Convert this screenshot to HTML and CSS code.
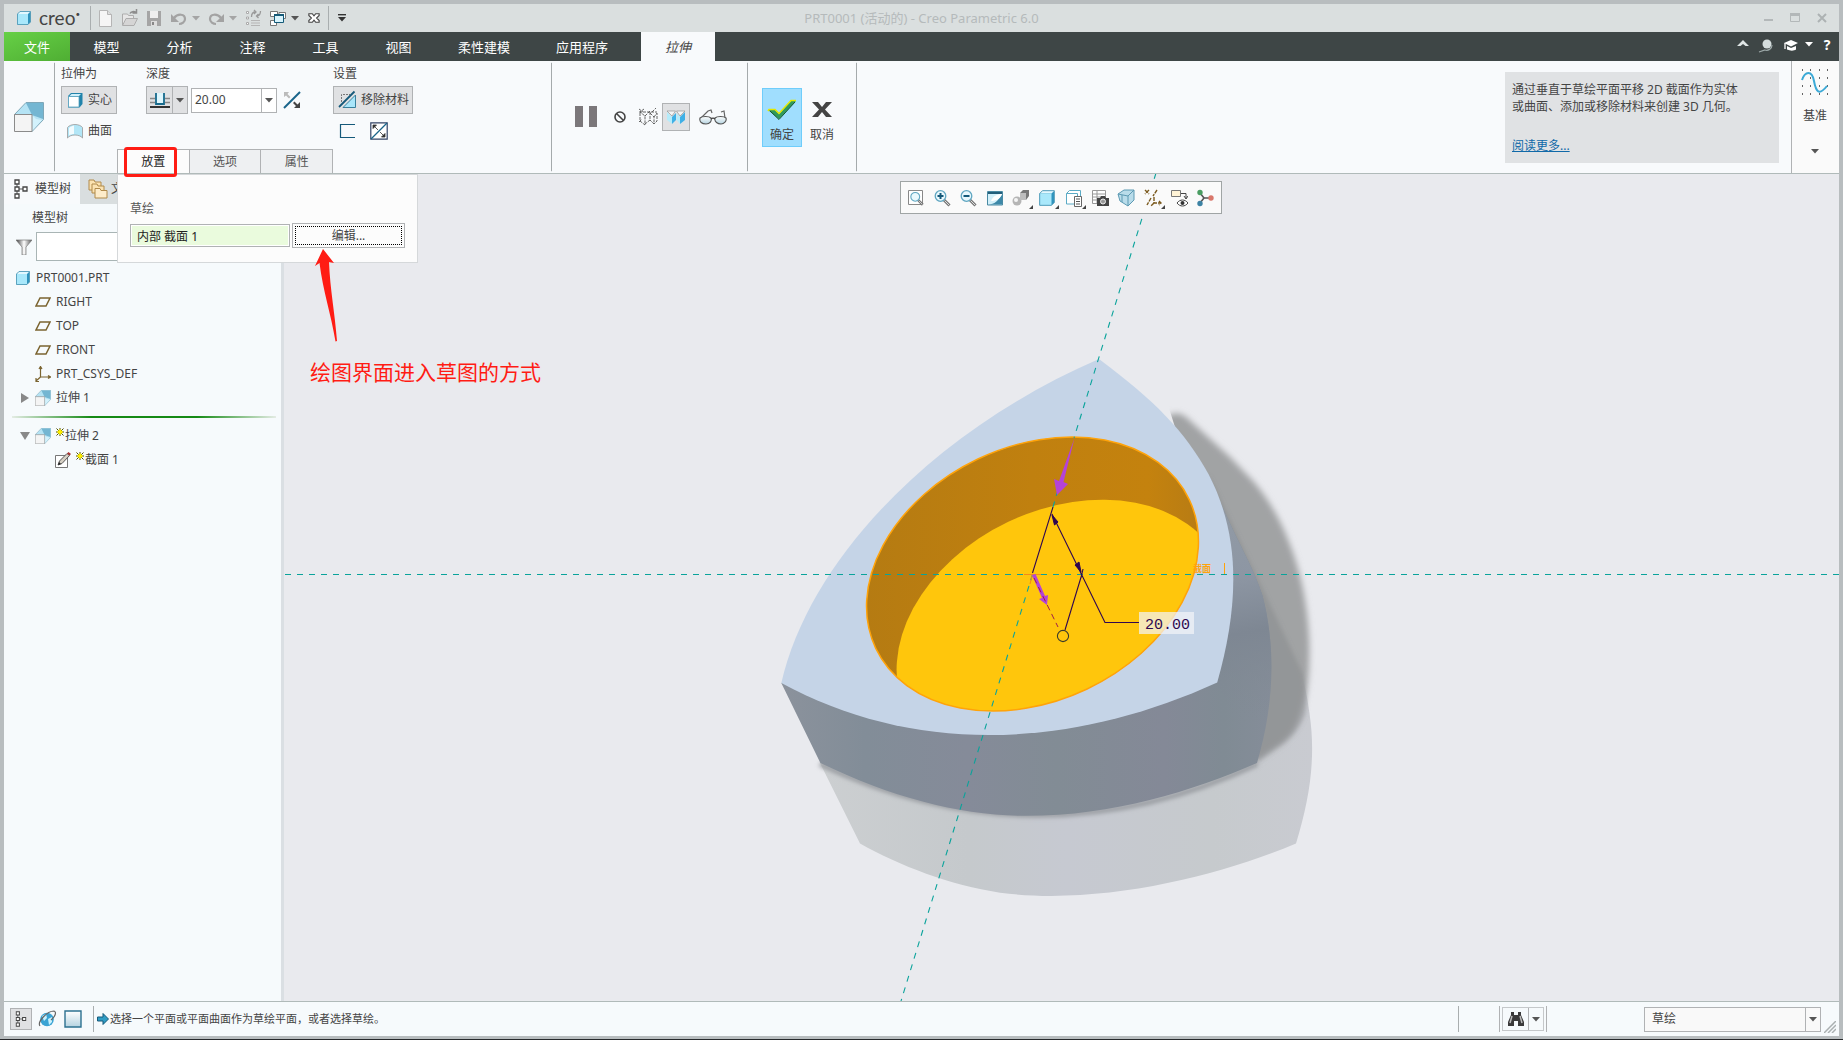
FILE: index.html
```html
<!DOCTYPE html>
<html lang="zh-CN">
<head>
<meta charset="utf-8">
<meta name="viewport" content="width=device-width, initial-scale=1">
<title>PRT0001 (活动的) - Creo Parametric 6.0</title>
<link rel="stylesheet" href="styles.css">
</head>
<body>
<svg class="defs" aria-hidden="true">
  <defs>
    <linearGradient id="gBlue" x1="0" y1="0" x2="1" y2="1"><stop offset="0" stop-color="#c9f1ff"/><stop offset="1" stop-color="#8fdcf8"/></linearGradient>
    <linearGradient id="gPane" x1="0" y1="0" x2="0" y2="1"><stop offset="0" stop-color="#fff"/><stop offset="1" stop-color="#b5d3e0"/></linearGradient>
    <linearGradient id="gGrey" x1="0" y1="0" x2="1" y2="0"><stop offset="0" stop-color="#333"/><stop offset=".5" stop-color="#fff"/><stop offset="1" stop-color="#555"/></linearGradient>
    <symbol id="cube" viewBox="0 0 16 16"><path d="M1.500 4L4 1.500H14.500V12L12 14.500H1.500z" fill="#2f93bd"/><path d="M1.500 4L4 1.500H14.500L12 4z" fill="#e2f8ff"/><path d="M1.500 4H12v10.500H1.500z" fill="#a9e8fb"/><path d="M1.500 4L4 1.500H14.500V12L12 14.500H1.500z" fill="none" stroke="#4a96b4" stroke-width=".8"/></symbol>
    <symbol id="extrude" viewBox="0 0 30 30"><path d="M12 .5H29.500V17.500L18 29.500V12.500H.5z" fill="#b5e3f4" stroke="#7fa7b8"/><path d="M12 1L29 1V17L18 13z" fill="#74b6d2"/><path d="M18 29V13L22 17L28 18z" fill="#d3f2fc"/><path d="M.5 12.500h17.500v17H.5z" fill="#f4f4f4" stroke="#8b8b8b"/></symbol>
    <symbol id="plane" viewBox="0 0 16 10"><path d="M5 1h10l-4 8H1z" fill="none" stroke="#7b6430" stroke-width="1.500"/></symbol>
    <symbol id="tree" viewBox="0 0 14 20"><path d="M3 5v3M3 12v3M5 10h4" stroke="#555" fill="none"/><path d="M1 1h4v4H1zM1 8h4v4H1zM1 15h4v4H1zM9 8h4v4H9z" fill="#fff" stroke="#444" stroke-width="1.300"/></symbol>
    <symbol id="down" viewBox="0 0 8 5"><path d="M0 0h8L4 4.500z" fill="currentColor"/></symbol>
    <symbol id="star" viewBox="0 0 8 8"><path d="M2 2h4v4H2z" fill="#ff0"/><path d="M.5 .5l2 2M7.500 .5l-2 2M.5 7.500l2-2M7.500 7.500l-2-2M4 0v2M4 6v2M0 4h2M6 4h2" stroke="#4c4c00" stroke-width="1"/><path d="M3 1.500h2v5H3zM1.500 3h5v2h-5z" fill="#ffee00"/></symbol>
    <symbol id="lens" viewBox="0 0 18 18"><path d="M11 11l5.500 5.500" stroke="#777" stroke-width="3"/><path d="M11.500 11.500l4.500 4.500" stroke="#ddd"/><circle cx="7.500" cy="7" r="5.300" fill="#e9f8fd" stroke="#5fa6c1" stroke-width="1.300"/></symbol>
  </defs>
</svg>

<header class="titlebar">
  <div class="quick">
    <svg class="i16" viewBox="0 0 16 16"><use href="#cube"/></svg>
    <span class="brand">creo<sup>•</sup></span>
    <span class="vline"></span>
    <button class="plain q-wide" aria-label="新建"><svg class="i18" viewBox="0 0 18 18"><path d="M2.500 1.500h8l4 4v12h-12z" fill="#f5f5f5" stroke="#b5b5b5"/><path d="M10.500 1.500v4h4" fill="#ddd" stroke="#b5b5b5"/></svg></button>
    <button class="plain q-wide" aria-label="打开"><svg class="i18" viewBox="0 0 18 18"><path d="M1.500 16V5h5l1 1.500h5V9" fill="#e6e6e6" stroke="#adadad"/><path d="M1.500 16.500L5 9.500h11.500l-3.500 7z" fill="#d5d5d5" stroke="#adadad"/><path d="M9 4.500c1-2 4-2.500 6-1M15.500 0v4h-4" fill="none" stroke="#8d8d8d" stroke-width="1.500"/></svg></button>
    <button class="plain q-wide" aria-label="保存"><svg class="i18" viewBox="0 0 18 18"><path d="M2 2h14v15H2z" fill="#a5a5a5"/><path d="M5 2h8v7H5z" fill="#eee"/><path d="M6 12h6v5H6z" fill="#ddd"/><path d="M7 13h2v3H7z" fill="#888"/></svg></button>
    <button class="plain undo" aria-label="撤消"><svg class="i18" viewBox="0 0 18 18"><path d="M4 9c4-5 11-4 11 1 0 3-3 5-6 5" fill="none" stroke="#a3a3a3" stroke-width="2.200"/><path d="M1 5v8h8z" fill="#a3a3a3"/></svg><svg class="arr dim" viewBox="0 0 8 5"><use href="#down"/></svg></button>
    <button class="plain undo" aria-label="重做"><svg class="i18" viewBox="0 0 18 18"><path d="M14 9C10 4 3 5 3 10c0 3 3 5 6 5" fill="none" stroke="#a3a3a3" stroke-width="2.200"/><path d="M17 5v8H9z" fill="#a3a3a3"/></svg><svg class="arr dim" viewBox="0 0 8 5"><use href="#down"/></svg></button>
    <button class="plain regen" aria-label="重新生成"><svg class="i18" viewBox="0 0 18 18"><path d="M2.500 2.500h2v2h-2zM2.500 8h2v2h-2zM2.500 13.500h2v2h-2z" fill="#fff" stroke="#aaa"/><path d="M7 11.500h9M7 14h9M7 16.500h9" stroke="#b5b5b5" stroke-width="1.200"/><path d="M7.500 8c0-4 2-5 4-5M10 1l2 2-2 2M16.500 2c0 4-2 5-4 5M14.500 5l-2 2 2 2" fill="none" stroke="#999" stroke-width="1.300"/></svg></button>
    <button class="plain undo" aria-label="窗口"><svg class="i18" viewBox="0 0 18 18"><path d="M1.500 2.500h7v5h-7zM1.500 11.500h6v5h-6z" fill="#fff" stroke="#777"/><path d="M10 3.500h6.500v6H10z" fill="#fff" stroke="#777"/><path d="M5.500 5.500h9v8h-9z" fill="#d8f3fc" stroke="#155a78"/><path d="M5 5h10v2H5z" fill="#155a78"/></svg><svg class="arr" viewBox="0 0 8 5"><use href="#down"/></svg></button>
    <button class="plain q-close" aria-label="关闭窗口"><svg class="i12" viewBox="0 0 14 14"><path d="M1 2h4l2 2.500L9 2h4v2l-3 3 3 3v2H9L7 9.500 5 12H1v-2l3-3-3-3z" fill="#fff" stroke="#444" stroke-width="1.300"/></svg></button>
    <span class="vline"></span>
    <button class="plain q-more" aria-label="自定义快速访问工具栏"><svg class="i10" viewBox="0 0 10 8"><path d="M1 .7h8" stroke="#333" stroke-width="1.400"/><path d="M1 3h8L5 7.500z" fill="#333"/></svg></button>
  </div>
  <h1 class="doc-title">PRT0001 (活动的) - Creo Parametric 6.0</h1>
  <div class="winctl">
    <button class="plain" aria-label="最小化"><svg class="i12" viewBox="0 0 12 12"><path d="M2 8h9" stroke="#b3b8b9" stroke-width="2"/></svg></button>
    <button class="plain" aria-label="最大化"><svg class="i12" viewBox="0 0 12 12"><path d="M1.500 2.500h9v7h-9z" fill="none" stroke="#b3b8b9"/><path d="M1 2.500h10" stroke="#b3b8b9" stroke-width="3"/></svg></button>
    <button class="plain" aria-label="关闭"><svg class="i12" viewBox="0 0 12 12"><path d="M2 2l8 8M10 2l-8 8" stroke="#adb2b3" stroke-width="2"/></svg></button>
  </div>
</header>

<nav class="tabs">
  <button class="tab file">文件</button>
  <button class="tab">模型</button>
  <button class="tab">分析</button>
  <button class="tab">注释</button>
  <button class="tab">工具</button>
  <button class="tab">视图</button>
  <button class="tab">柔性建模</button>
  <button class="tab">应用程序</button>
  <button class="tab active">拉伸</button>
  <div class="tabs-tools">
    <button class="plain" aria-label="最小化功能区"><svg class="i12" viewBox="0 0 12 12"><path d="M0 7l6-6 6 6H8.500L6 5 3.500 7z" fill="#dfe5e5"/></svg></button>
    <button class="plain" aria-label="命令搜索"><svg class="i16" viewBox="0 0 16 16"><circle cx="9" cy="7" r="4.500" fill="#d5dede"/><path d="M14 8c0 4-4 6-7 5l-6 2" fill="none" stroke="#9eaaaa" stroke-width="1.200"/></svg></button>
    <button class="plain cap" aria-label="学习"><svg class="i16" viewBox="0 0 16 16"><path d="M8 3l7 3-7 3.500L1 6z" fill="#fff"/><path d="M4 9l4 2 5-2v3.500c-2 1.500-6 1.500-9 0z" fill="#fff"/><path d="M2 6v6" stroke="#fff" stroke-width="1.300"/></svg><svg class="arr" viewBox="0 0 8 5"><use href="#down"/></svg></button>
    <button class="plain help" aria-label="帮助">?</button>
  </div>
</nav>

<section class="ribbon">
  <div class="feature"><svg class="i30" viewBox="0 0 30 30"><use href="#extrude"/></svg></div>
  <div class="dash">
    <div class="groups">
      <div class="group g-as">
        <h2>拉伸为</h2>
        <button class="btn on"><svg class="i16" viewBox="0 0 16 16"><path d="M1 4L4 1h11.500V12l-3 3.500H1z" fill="#2183ab"/><path d="M2.500 4l2-2H14l-2 2z" fill="#cfeffa"/><path d="M1.500 4.500H12v10.500H1.500z" fill="#fff" stroke="#5ba3bf" stroke-width=".8"/></svg>实心</button>
        <button class="btn"><svg class="i16" viewBox="0 0 16 16"><path d="M.5 15V4.500c3-4 12-4 15 0V15c-3-4-12-4-15 0z" fill="#b2e6f7" stroke="#999" stroke-width=".8"/><path d="M2 12.500V5c1-1 3-2 5-2.500v8.500c-2 0-4 .5-5 1.500z" fill="#f2fbfe"/></svg>曲面</button>
      </div>
      <div class="group g-depth">
        <h2>深度</h2>
        <div class="row">
          <div class="split">
            <button aria-label="盲孔"><svg class="i20" viewBox="0 0 20 16"><path d="M0 6.500h5M15 6.500h5M0 10.500h5M15 10.500h5" stroke="#888" stroke-width="1.500"/><path d="M6 1v11h8V1" fill="#dff6fd" stroke="#176a8c" stroke-width="1.800"/><path d="M0 15h20" stroke="#333" stroke-width="2"/></svg></button>
            <button class="drop" aria-label="深度选项"><svg class="arr" viewBox="0 0 8 5"><use href="#down"/></svg></button>
          </div>
          <div class="combo"><input type="text" value="20.00" aria-label="深度值"><button class="drop" aria-label="最近的值"><svg class="arr" viewBox="0 0 8 5"><use href="#down"/></svg></button></div>
          <button class="plain flip" aria-label="反向"><svg class="i18" viewBox="0 0 18 18"><path d="M1 17L17 1" stroke="#19648a" stroke-width="2"/><path d="M1 1h5L4.500 3l3 3-1.500 1.500-3-3L1 6z" fill="#bbb"/><path d="M17 17h-6l2-2-3-3 1.500-1.500 3 3L17 11z" fill="#444"/></svg></button>
        </div>
      </div>
      <div class="group g-set">
        <h2>设置</h2>
        <button class="btn on remove"><svg class="i20" viewBox="0 0 20 20"><path d="M3.500 12V4.500H12" fill="none" stroke="#777" stroke-dasharray="2 1"/><path d="M5 17.500L17.500 5v12.500z" fill="#a9e6fa" stroke="#39809c"/><path d="M1 17L16.500 1.500" stroke="#15597a" stroke-width="1.800"/></svg>移除材料</button>
        <div class="row minis">
          <button class="plain" aria-label="加厚草绘"><svg class="i18" viewBox="0 0 18 18"><path d="M16 2.500H1.500v13H16" fill="none" stroke="#15597a" stroke-width="1.200"/></svg></button>
          <button class="plain" aria-label="反向材料侧"><svg class="i18" viewBox="0 0 18 18"><path d="M.8.800h16.400v16.400H.800z" fill="#fff" stroke="#346" stroke-width="1.200"/><path d="M1 17L17 1" stroke="#19648a" stroke-width="1.200"/><path d="M3 3h3.500L3 6.500zM4 4l4 4M15 15h-3.500l3.500-3.500zM14 14l-4-4" fill="#333" stroke="#333" stroke-width=".8"/></svg></button>
        </div>
      </div>
    </div>
    <div class="subtabs">
      <button class="subtab current">放置</button>
      <button class="subtab">选项</button>
      <button class="subtab">属性</button>
      <div class="popup">
        <label for="sk">草绘</label>
        <div class="popup-row"><input id="sk" type="text" value="内部 截面 1"><button class="edit"><span>编辑...</span></button></div>
      </div>
    </div>
  </div>
  <div class="view-ctl">
    <button class="plain" aria-label="暂停"><svg class="i24" viewBox="0 0 24 22"><path d="M1 0h8v21H1zM15 0h8v21h-8z" fill="#7b777a"/></svg></button>
    <button class="plain" aria-label="无预览"><svg class="i12" viewBox="0 0 12 12"><circle cx="6" cy="6" r="5" fill="none" stroke="#444" stroke-width="1.600"/><path d="M2.500 2.500l7 7" stroke="#444" stroke-width="1.600"/></svg></button>
    <button class="plain" aria-label="分离预览"><svg class="i20" viewBox="0 0 20 18"><path d="M1 4h18M2 5v8l5 4v-9L2 4l4-3M7 8l5-5v9l-5 4M12 5l4 4v7l-4-4M16 9l3-4v8l-3 3M1 1l4 3M14 4l4-4M1 14l3-3" fill="none" stroke="#555" stroke-dasharray="3 1" stroke-width=".9"/></svg></button>
    <button class="press" aria-label="连接预览"><svg class="i20" viewBox="0 0 20 14"><path d="M1 2l5 5v7l-5-4z" fill="#b5ecfb"/><path d="M6 7l4-4v7l-4 4z" fill="#3fb0e6"/><path d="M10.500 3l3.500 4v7l-3.500-4z" fill="#b5ecfb"/><path d="M14 7l5-5v8l-5 4z" fill="#3fb0e6"/><path d="M1 1h8.500L6 6zM10.500 1H19l-5 5z" fill="#f5f5f5" stroke="#888" stroke-width=".6"/></svg></button>
    <button class="plain" aria-label="已验证预览"><svg class="i28" viewBox="0 0 28 16"><path d="M2 9L9 2l3-1 1 3M26 9l-1-7-3 1" fill="none" stroke="#666" stroke-width="1.200"/><path d="M1 9c2-2 9-2 11 0 1 3-1 6-5 6S0 13 1 9zM16 9c2-2 9-2 11 0 1 3-2 6-5 6s-7-2-6-6z" fill="url(#gPane)" stroke="#555" stroke-width="1.100"/><path d="M12 10c1-1 3-1 4 0" fill="none" stroke="#444" stroke-width="1.300"/></svg></button>
  </div>
  <div class="confirm">
    <button class="ok"><svg class="i30" viewBox="0 0 30 22"><path d="M1 11h7l4 4L24 2h5L12 20z" fill="#2f9a5c"/><path d="M1 12l1-1.500h6l4 4L24 1.500h5" fill="none" stroke="#e4e800" stroke-width="1.500"/><path d="M3 12l9 8.500L28 3" fill="none" stroke="#14552c" stroke-width="1"/></svg>确定</button>
    <button class="no"><svg class="i20" viewBox="0 0 20 18"><path d="M0 1h6l4 5 4-5h6l-7 7.500 7 7.500h-6l-4-5-4 5H0l7-7.500z" fill="#444"/></svg>取消</button>
  </div>
  <aside class="tip">
    <p>通过垂直于草绘平面平移 2D 截面作为实体<br>或曲面、添加或移除材料来创建 3D 几何。</p>
    <a href="#more">阅读更多...</a>
  </aside>
  <button class="datum"><svg class="i28" viewBox="0 0 28 28"><path d="M1 1h1M9 1h1M18 1h1M26 1h1M1 9h1M9 9h1M18 9h1M26 9h1M1 17h1M9 17h1M18 17h1M26 17h1M1 25h1M9 25h1M18 25h1M26 25h1" stroke="#333" stroke-width="1.300"/><path d="M1 11C4 2 11 1 13 12s5 15 13 5" fill="none" stroke="#3ba9d6" stroke-width="2"/></svg><span>基准</span><svg class="arr" viewBox="0 0 8 5"><use href="#down"/></svg></button>
</section>

<main class="work">
  <aside class="navigator">
    <div class="nav-tabs">
      <button class="nav-tab sel"><svg class="i14x20" viewBox="0 0 14 20"><use href="#tree"/></svg>模型树</button>
      <button class="nav-tab"><svg class="i20" viewBox="0 0 20 20"><path d="M1 3V1h5l1 2h6v8H1z" fill="#fbe3b2" stroke="#b08a4b"/><path d="M4 7V5h5l1 2h6v7H4z" fill="#fbe3b2" stroke="#b08a4b"/><path d="M7 19V9.500h5l1 2h6V19z" fill="#fdecca" stroke="#b08a4b"/></svg>文件夹浏览器</button>
    </div>
    <h2 class="nav-title">模型树</h2>
    <div class="filter"><svg class="i16" viewBox="0 0 16 16"><path d="M0 1h16L10 8v8H6V8z" fill="url(#gGrey)" stroke="#777" stroke-width=".7"/></svg><input type="search" aria-label="过滤模型树"></div>
    <ul class="model-tree">
      <li class="l0"><svg class="i16" viewBox="0 0 16 16"><use href="#cube"/></svg>PRT0001.PRT</li>
      <li class="l1"><svg class="i16" viewBox="0 0 16 10"><use href="#plane"/></svg>RIGHT</li>
      <li class="l1"><svg class="i16" viewBox="0 0 16 10"><use href="#plane"/></svg>TOP</li>
      <li class="l1"><svg class="i16" viewBox="0 0 16 10"><use href="#plane"/></svg>FRONT</li>
      <li class="l1"><svg class="i16" viewBox="0 0 16 16"><path d="M5.500 1v10H15M5.500 11L1 15M4 3l1.500-2.500L7 3M13 9.500l2.500 1.500-2.500 1.500M1 12v3.500h3" fill="none" stroke="#7b6430" stroke-width="1.200"/></svg>PRT_CSYS_DEF</li>
      <li class="l1 exp"><svg class="tw" viewBox="0 0 8 10"><path d="M0 0l8 5-8 5z" fill="#888"/></svg><svg class="i16" viewBox="0 0 30 30"><use href="#extrude"/></svg>拉伸 1</li>
      <li class="insert"></li>
      <li class="l1 exp"><svg class="tw" viewBox="0 0 10 10"><path d="M0 1h10L5 9z" fill="#888"/></svg><svg class="i16" viewBox="0 0 30 30"><use href="#extrude"/></svg><span><svg class="st" viewBox="0 0 8 8"><use href="#star"/></svg>拉伸 2</span></li>
      <li class="l2"><svg class="i16" viewBox="0 0 16 16"><path d="M.5 3.500h12v12H.5z" fill="#fff" stroke="#777"/><path d="M3 13l1.500-4L12 1.500l2.500 2L7 11.500z" fill="#d7d0c4" stroke="#555"/><path d="M12 1.500L13.500 0 16 2l-1.500 1.500z" fill="#a33"/><path d="M3 13l1-3 2 2z" fill="#222"/></svg><span><svg class="st" viewBox="0 0 8 8"><use href="#star"/></svg>截面 1</span></li>
    </ul>
  </aside>

  <section class="stage">
    <svg class="scene" viewBox="284 174 1555 827" preserveAspectRatio="xMidYMid slice" role="img" aria-label="三维模型">
      <defs>
        <clipPath id="hole"><ellipse cx="1032.500" cy="574" rx="173.500" ry="127.300" transform="rotate(-25.400 1032.500 574)"/></clipPath>
        <clipPath id="behind"><path d="M1160 380H1340V780H1257L1230 600z"/></clipPath>
        <linearGradient id="front" x1="781" y1="0" x2="1273" y2="0" gradientUnits="userSpaceOnUse"><stop offset="0" stop-color="#8b929c"/><stop offset=".17" stop-color="#828d98"/><stop offset=".38" stop-color="#858b99"/><stop offset=".56" stop-color="#828c95"/><stop offset=".78" stop-color="#848997"/><stop offset=".9" stop-color="#808b94"/><stop offset="1" stop-color="#858d99"/></linearGradient>
        <linearGradient id="side" x1="1225" y1="500" x2="1262" y2="720" gradientUnits="userSpaceOnUse"><stop offset="0" stop-color="#929ba6"/><stop offset=".35" stop-color="#8d96a3"/><stop offset=".6" stop-color="#7e8793"/><stop offset="1" stop-color="#828b95" stop-opacity="0"/></linearGradient>
        <linearGradient id="wall" x1="866" y1="0" x2="1198" y2="0" gradientUnits="userSpaceOnUse"><stop offset="0" stop-color="#b57b12"/><stop offset=".5" stop-color="#c0800f"/><stop offset=".85" stop-color="#c4820e"/><stop offset="1" stop-color="#b87c14"/></linearGradient>
        <linearGradient id="mirror" x1="820" y1="0" x2="1312" y2="0" gradientUnits="userSpaceOnUse"><stop offset="0" stop-color="#cccfd1"/><stop offset=".3" stop-color="#c5c9cc"/><stop offset=".5" stop-color="#c6c9d1"/><stop offset=".8" stop-color="#c6cacd"/><stop offset="1" stop-color="#c9cbd1"/></linearGradient>
        <filter id="soft" x="-20%" y="-20%" width="140%" height="140%"><feGaussianBlur stdDeviation="3"/></filter>
        <filter id="soft2" x="-20%" y="-20%" width="140%" height="140%"><feGaussianBlur stdDeviation="2"/></filter>
      </defs>
      <path d="M820 763L860 843.500C900 866 950 885 1000 892.700C1100 906 1220 876 1296 843.500C1310 798 1316 757 1309.500 713.500C1305 675 1292 640 1275 600L1200 600z" fill="url(#mirror)"/>
      <g clip-path="url(#behind)"><path d="M1164 420Q1174 408 1186 417L1230 457L1254 482Q1276 508 1289 542Q1306 584 1309 636Q1311 680 1303 708Q1298 730 1284 742L1250 766L1200 640z" fill="#a1a3a4" filter="url(#soft)"/>
        <path d="M1209 475L1302.500 673Q1308 695 1305 715Q1298 732 1284 743L1257 762z" fill="#76787c" fill-opacity=".32" filter="url(#soft2)"/></g>
      <path d="M820 764C960 830 1110 834 1257 764" fill="none" stroke="#989ba0" stroke-width="5" filter="url(#soft2)"/>
      <path d="M781.300 683L820.400 763C890 797 960 815 1020 815.800C1110 817 1190 792 1257 763C1273 710 1277 650 1262.400 595.300C1252 562 1234 538 1209 475L1100 600z" fill="url(#front)"/>
      <path d="M1209 475C1234 538 1252 562 1262.400 595.300C1277 650 1273 710 1257 763L1217 683z" fill="url(#side)"/>
      <path d="M1099 359C1155 401 1184 430 1209 475C1242 539 1238 609 1217.200 682.600C1065 752 910 753 781.300 683C810 558 935 430 1099 359z" fill="#c5d4e7"/>
      <g clip-path="url(#hole)">
        <path d="M850 420h370v310H850z" fill="url(#wall)"/>
        <ellipse cx="1063" cy="637" rx="174" ry="127.500" transform="rotate(-25.400 1063 637)" fill="#ffc60c"/>
      </g>
      <ellipse cx="1032.500" cy="574" rx="173.500" ry="127.300" transform="rotate(-25.400 1032.500 574)" fill="none" stroke="#ffa30a" stroke-width="1.500"/>
      <g fill="none" stroke="#0aa39b" stroke-width="1.100" stroke-dasharray="6 6">
        <path d="M285 574.500H1840"/>
        <path d="M1156 173L1074 438M1058 490L1053 507M1032.500 574.500L901 1001"/>
      </g>
      <path d="M1024 574.500h17M1032.500 574L1030 584" stroke="#f38b16"/>
      <g fill="none" stroke="#2f0650" stroke-width="1.100"><path d="M1032.500 573L1053 507M1052 514L1105 622.500H1139M1082 574L1065 630M1083 569L1081 578"/><circle cx="1063" cy="636" r="5.600" stroke="#3b3b2b"/></g>
      <path d="M1052 515l2.500 10 3.500-3zM1081 572l-6-7 4-3z" fill="#2f0650" stroke="#2f0650"/>
      <path d="M1074.500 438l-11 44 4.500 2-11 11-3-16 5 2z" fill="#b443d8"/>
      <path d="M1032 575l3.500-1 9.500 22 3-1-1 10-8-6 3-1z" fill="#b443d8"/>
      <path d="M1034 578L1058 627" stroke="#a02048" stroke-dasharray="6 4" fill="none"/>
      <path d="M1139 612h55v22h-55z" fill="#f2f4f8" fill-opacity=".72"/>
      <text class="dim-text" x="1145" y="629">20.00</text>
      <text class="sec-text" x="1193" y="572">截面</text><path d="M1224.500 563v11" stroke="#ffa30a"/>
    </svg>
    <div class="view-bar">
      <button class="plain" aria-label="重新调整"><svg class="i18" viewBox="0 0 18 18"><path d="M1.500 1.500h14v14h-14z" fill="#fff" stroke="#888"/><use href="#lens" x="2" y="2" width="15" height="15"/></svg></button>
      <button class="plain" aria-label="放大"><svg class="i18" viewBox="0 0 18 18"><use href="#lens"/><path d="M4.500 7h6M7.500 4v6" stroke="#14597a" stroke-width="2"/></svg></button>
      <button class="plain" aria-label="缩小"><svg class="i18" viewBox="0 0 18 18"><use href="#lens"/><path d="M4.500 7h6" stroke="#14597a" stroke-width="2"/></svg></button>
      <button class="plain" aria-label="重画"><svg class="i18" viewBox="0 0 18 18"><path d="M1.500 2.500h15v13.500h-15z" fill="#d3f0fa" stroke="#4a8aa3"/><path d="M2 3h14v2H2z" fill="#235f7b"/><path d="M2 15.500c7 0 10-4 14-10v10z" fill="#3d88a8"/><path d="M5 12c2-5 6-7 11-7-2 5-6 7-11 7z" fill="#fff"/></svg></button>
      <button class="plain more" aria-label="渲染选项"><svg class="i18" viewBox="0 0 18 18"><circle cx="5" cy="12" r="4.500" fill="#b5b5b5"/><path d="M8 4l3-3h6v6l-3 4H8z" fill="#777"/><path d="M8 4h6v7H8z" fill="#bdbdbd"/><circle cx="4" cy="11" r="2" fill="#f5f5f5"/></svg></button>
      <button class="plain more" aria-label="显示样式"><svg class="i18" viewBox="0 0 16 16"><use href="#cube"/></svg></button>
      <button class="plain more" aria-label="已保存方向"><svg class="i18" viewBox="0 0 18 18"><path d="M1.500 4.500l3-3h11V12l-3 3h-11z" fill="#fff" stroke="#5baac5"/><path d="M1.500 4.500h11V15" fill="none" stroke="#5baac5"/><path d="M9.500 7.500h7v10h-7z" fill="#fff" stroke="#666"/><path d="M11 10h4M11 12.500h4M11 15h4" stroke="#555"/></svg></button>
      <button class="plain" aria-label="视图管理器"><svg class="i18" viewBox="0 0 18 18"><path d="M1.500 1.500h13v13h-13zM1.500 5h13M1.500 8h13M1.500 11h13M6 1.500v13" fill="#fff" stroke="#999"/><path d="M6 9h3l1-2h4l1 2h3v8H6z" fill="#444"/><circle cx="12" cy="12.500" r="2.500" fill="#999" stroke="#eee"/></svg></button>
      <button class="plain" aria-label="透视图"><svg class="i18" viewBox="0 0 18 18"><path d="M1 5l6-4h10v10l-6 6-8-5z" fill="#b9dcea" stroke="#5d9ab3"/><path d="M1 5l10 2 6-6M11 7v10M5 6v7" fill="none" stroke="#5d9ab3"/></svg></button>
      <button class="plain more" aria-label="基准显示过滤器"><svg class="i18" viewBox="0 0 18 18"><path d="M1 1l4 4M5 1L1 5M13 1L9 7M7 9l-4 7M10 8v6h7M10 14l-3 3M15 12l2 2-2 2" fill="none" stroke="#7b5a1e" stroke-width="1.400" stroke-dasharray="4 1"/></svg></button>
      <button class="plain" aria-label="注释显示"><svg class="i18" viewBox="0 0 18 18"><path d="M1.500 1.500h9v6h-9z" fill="#fff3d6" stroke="#777"/><path d="M11 4.500h5v5M14 7l2 3 2-3" fill="none" stroke="#444"/><path d="M7 14c3-4 8-4 11 0-3 4-8 4-11 0z" fill="#fff" stroke="#444"/><circle cx="12.500" cy="14" r="2" fill="#333"/></svg></button>
      <button class="plain" aria-label="旋转中心"><svg class="i18" viewBox="0 0 18 18"><path d="M4 4l4 5h7M8 9l-4 5" fill="none" stroke="#555" stroke-width="1.600"/><circle cx="4" cy="3.500" r="2.700" fill="#4a9d62"/><circle cx="15" cy="9" r="2.700" fill="#d9776b"/><circle cx="4" cy="14.500" r="2.700" fill="#3d83a4"/></svg></button>
    </div>
  </section>

  <div class="note">
    <svg class="note-arrow" viewBox="0 0 24 94"><path d="M9 0L20 14L15 13C16 40 21 65 23 92L21.500 92.500C17 65 9 42 5.500 14L1 17z" fill="#ff1c14"/></svg>
    <p>绘图界面进入草图的方式</p>
  </div>
</main>

<footer class="status">
  <button class="press st-tree" aria-label="模型树"><svg class="i12x16" viewBox="0 0 14 20"><use href="#tree"/></svg></button>
  <button class="plain" aria-label="浏览器"><svg class="i18" viewBox="0 0 18 18"><circle cx="9" cy="9.500" r="6.800" fill="#3aa3d3"/><path d="M4 6l4-2 1 4-3 3zM10 9l4-2v5l-3 3z" fill="#c8f1fd"/><path d="M2 16C-1 12 9 1 16 1c3 1 1 6-3 9" fill="none" stroke="#666" stroke-width="1.200"/></svg></button>
  <button class="plain" aria-label="全屏"><svg class="i18" viewBox="0 0 18 18"><path d="M1 1h16v16H1z" fill="url(#gPane)" stroke="#2d7190" stroke-width="1.400"/></svg></button>
  <span class="vline"></span>
  <p class="msg"><svg class="i12" viewBox="0 0 12 12"><path d="M.5 4h5.500V0.500L11.500 6 6 11.500V8H.5z" fill="#2f9cc4" stroke="#14597a"/></svg>选择一个平面或平面曲面作为草绘平面，或者选择草绘。</p>
  <span class="vline"></span>
  <div class="find-wrap">
    <div class="find"><button aria-label="查找"><svg class="i18" viewBox="0 0 18 18"><path d="M4 2h3v3h4V2h3v3l3 7v4h-6v-5H7v5H1v-4l3-7z" fill="#3a3a3a"/><path d="M5 6l-2 7M13 6l2 7" stroke="#bbb" stroke-width="1.500"/></svg></button><button class="drop" aria-label="查找选项"><svg class="arr" viewBox="0 0 8 5"><use href="#down"/></svg></button></div>
  </div>
  <div class="pick"><select aria-label="选择过滤器"><option>草绘</option></select><svg class="arr" viewBox="0 0 8 5"><use href="#down"/></svg></div>
  <svg class="i12 grip" viewBox="0 0 12 12"><path d="M0 12L12 0M4 12l8-8M8 12l4-4" stroke="#aab0b1" stroke-width="1.500"/></svg>
</footer>
</body>
</html>
```
FILE: styles.css
```css
*, *::before, *::after { box-sizing: border-box; }
html { background: #26282b; }
body {
  margin: 0;
  min-height: calc(100vh - 1px);
  display: flex;
  flex-direction: column;
  border: 4px solid #b8bdbf;
  border-bottom-width: 3px;
  background: #f6fafc;
  color: #444;
  font: 12px/16px "Noto Sans", "Noto Sans CJK SC", sans-serif;
}
button, input, select { font: inherit; color: inherit; margin: 0; padding: 0; border-radius: 0; outline: none; }
h1, h2, p, ul { margin: 0; padding: 0; font-size: 12px; font-weight: 400; }
svg { display: block; flex: none; }
.defs { position: absolute; width: 0; height: 0; }
.plain { border: 0; background: none; display: flex; align-items: center; justify-content: center; }
.row { display: flex; align-items: center; }
.i10 { width: 10px; height: 8px; }
.i12 { width: 12px; height: 12px; }
.i16 { width: 16px; height: 16px; }
.i18 { width: 18px; height: 18px; }
.i20 { width: 20px; height: 20px; }
.i24 { width: 24px; height: 22px; }
.i28 { width: 28px; height: 28px; }
.i30 { width: 30px; height: 30px; }
.i14x20 { width: 14px; height: 20px; }
.i12x16 { width: 12px; height: 16px; }
.arr { width: 8px; height: 5px; color: #555; }
.arr.dim { color: #a5a5a5; }
.vline { width: 1px; height: 24px; background: #a9aeaf; flex: none; }

/* title bar */
.titlebar {
  height: 28px;
  display: grid;
  grid-template-columns: 1fr auto 1fr;
  align-items: center;
  background: #dadfdf;
}
.quick { display: flex; align-items: center; padding-left: 12px; }
.brand { width: 51px; margin-left: 7px; font: 19px/24px Lato, sans-serif; color: #444; }
.brand sup { font-size: 8px; line-height: 8px; vertical-align: 8px; }
.quick .vline { margin-right: 3px; }
.q-wide { width: 24px; }
.undo { width: 37px; gap: 4px; }
.regen { width: 25px; }
.q-close { width: 24px; margin-right: 2px; }
.q-more { width: 20px; }
.doc-title { font-size: 13px; line-height: 20px; color: #b5babb; }
.winctl { display: flex; justify-content: flex-end; gap: 15px; padding-right: 11px; }

/* ribbon tabs */
.tabs { height: 29px; display: flex; background: #3e4646; }
.tab { border: 0; background: none; color: #fff; min-width: 73px; padding: 0 23px; font-size: 13px; line-height: 20px; }
.tab.file { min-width: 66px; padding: 0; background: linear-gradient(160deg, #66d046, #4fae33); }
.tab.active { min-width: 74px; margin-left: 10px; background: #f8fafc; color: #444; font-style: italic; }
.tabs-tools { margin-left: auto; display: flex; align-items: center; gap: 9px; padding: 0 7px 4px 0; color: #fff; }
.tabs-tools .arr { color: #fff; }
.cap { gap: 6px; }
.help { width: 10px; font: bold 14px/16px "Noto Sans", sans-serif; }

/* ribbon */
.ribbon { height: 113px; display: flex; background: #f8fafc; border-bottom: 1px solid #b0bab9; }
.feature, .dash, .view-ctl, .confirm { border-right: 1px solid; border-image: linear-gradient(transparent 2%, #a5aaac 3%, #a5aaac 97%, transparent 98%) 1; flex: none; }
.feature { width: 51px; display: flex; align-items: center; justify-content: center; }
.dash { width: 497px; display: flex; flex-direction: column; justify-content: space-between; }
.groups { display: flex; padding: 5px 0 0 6px; }
.group { display: flex; flex-direction: column; align-items: flex-start; }
.group h2 { height: 20px; line-height: 16px; }
.g-as { width: 85px; }
.g-depth { width: 187px; }
.btn { display: flex; align-items: center; gap: 5px; height: 28px; padding: 0 4px 0 5px; border: 1px solid transparent; background: none; width: 56px; white-space: nowrap; }
.btn + .btn { margin-top: 3px; }
.btn.on, .press { background: #e0e1e3; border: 1px solid #b0b2b4; }
.btn.remove { width: 80px; padding: 0 3px 0 4px; gap: 3px; }
.split { display: flex; width: 42px; height: 28px; background: #e0e1e3; border: 1px solid #b0b2b4; margin-right: 3px; }
.split button, .combo button, .find button { border: 0; background: none; flex: 1; display: flex; align-items: center; justify-content: center; }
.split .drop, .combo .drop, .find .drop { border-left: 1px solid #b0b2b4; flex: 0 0 15px; }
.combo { display: flex; width: 86px; height: 25px; background: #fff; border: 1px solid #b0b2b4; }
.combo input { flex: 1; min-width: 0; border: 0; padding-left: 3px; background: none; }
.flip { margin-left: 6px; }
.minis { gap: 13px; padding: 8px 0 0 6px; }
.minis .plain { width: 18px; }
.subtabs { position: relative; display: flex; margin-left: 62px; width: 216px; }
.subtab { flex: 1; height: 24px; border: 1px solid #b0b2b4; border-bottom: 0; background: #eef0f2; color: #555; line-height: 20px; }
.subtab + .subtab { margin-left: -1px; }
.subtab.current { background: #fcfcfc; color: #222; }
.subtab.current::after { content: ""; position: absolute; left: 7px; top: -2px; width: 53px; height: 30px; border: 3px solid #ff1c14; border-radius: 3px; z-index: 5; }
.popup { position: absolute; left: 0; top: 25px; width: 301px; height: 89px; z-index: 3; padding: 26px 12px 0; background: #fcfcfc; border: 1px solid #d5d8da; }
.popup label { display: block; line-height: 16px; color: #555; }
.popup-row { display: flex; align-items: center; gap: 2px; margin-top: 6px; }
.popup input { width: 160px; height: 23px; padding-left: 6px; border: 1px solid #b0b2b4; background: #eafbdd; box-shadow: inset 0 0 0 1px #fff; color: #222; }
.edit { flex: 1; height: 25px; padding: 2px; border: 1px solid #b0b2b4; background: #fcfcfc; }
.edit span { display: block; border: 1px dotted #000; line-height: 17px; }
.view-ctl { width: 196px; display: flex; align-items: center; gap: 12px; padding: 0 20px 0 22px; }
.view-ctl .i12 { margin: 0 0 0 4px; }
.press { display: flex; align-items: center; justify-content: center; }
.view-ctl .press { width: 28px; height: 28px; margin: 0 -3px 0 -8px; flex: none; }
.confirm { width: 109px; display: flex; align-items: center; padding: 0 0 0 14px; }
.confirm button { display: flex; flex-direction: column; align-items: center; justify-content: space-between; width: 40px; height: 59px; border: 1px solid transparent; background: none; padding: 6px 0 3px; }
.confirm .i20 { margin-top: 5px; }
.confirm .ok { background: #a0defe; border-color: #6fcdfb; }
.tip { width: 274px; margin: 11px 12px 10px auto; padding: 9px 7px; background: #e0e2e4; display: flex; flex-direction: column; justify-content: space-between; line-height: 17px; white-space: nowrap; }
.tip a { color: #1069a8; align-self: flex-start; }
.datum { width: 48px; flex: none; display: flex; flex-direction: column; align-items: center; border: 0; border-left: 1px solid #b0b2b4; background: #fafafa; padding: 8px 1px 0 0; }
.datum span { margin: 11px 0 25px; }

/* work area */
.work { flex: 1; display: flex; position: relative; }
.navigator { width: 280px; flex: none; border-right: 3px solid #dadfe3; background: #f6fafc; }
.nav-tabs { display: flex; height: 30px; }
.nav-tab { border: 0; background: #d9dedf; display: flex; align-items: center; gap: 3px; padding: 0 8px; white-space: nowrap; flex: 1; overflow: hidden; }
.nav-tab.sel { flex: 0 0 76px; background: #f8fafc; padding: 0 0 0 10px; gap: 7px; }
.nav-title { line-height: 16px; padding: 6px 0 6px 28px; }
.filter { display: flex; align-items: center; gap: 4px; padding: 0 8px 0 12px; }
.filter input { flex: 1; height: 29px; border: 1px solid #a9b5b5; background: #fff; }
.model-tree { list-style: none; padding: 5px 5px 0 8px; }
.model-tree li { display: flex; align-items: center; gap: 5px; height: 24px; }
.model-tree .l0 { padding-left: 3px; }
.model-tree .l1 { padding-left: 23px; }
.model-tree .l2 { padding-left: 43px; }
.model-tree .exp { padding-left: 8px; }
.tw { width: 10px; height: 10px; }
.st { display: inline-block; width: 8px; height: 8px; vertical-align: 4px; margin-right: 1px; }
.model-tree .insert { height: 2px; margin: 6px 0 6px; background: linear-gradient(90deg, #e4ece4, #158a15 30%, #158a15 70%, #e4ece4); }
.stage { flex: 1; min-width: 0; position: relative; background: #e9eaee; overflow: hidden; }
.scene { position: absolute; inset: 0; width: 100%; height: 100%; }
.dim-text { font: 15px "Liberation Mono", monospace; fill: #2f0650; }
.sec-text { font: bold 9px "Noto Sans CJK SC", sans-serif; fill: #ffa30a; }
.view-bar { position: absolute; top: 7px; left: 50%; width: 322px; height: 33px; margin-left: -162px; display: flex; align-items: center; justify-content: space-between; padding: 0 6px; background: #fafafa; border: 1px solid #a0a5a5; }
.more { position: relative; }
.more::after { content: ""; position: absolute; right: -3px; bottom: -2px; border: 2px solid; border-color: transparent #444 #444 transparent; }
.note { position: absolute; left: 306px; top: 75px; color: #ff1c14; z-index: 6; }
.note-arrow { width: 24px; height: 94px; margin-left: 4px; }
.note p { font-size: 21px; line-height: 28px; margin-top: 15px; }

/* status bar */
.status { height: 35px; display: flex; align-items: center; border-top: 1px solid #b0bab9; padding: 0 3px 0 6px; background: #f6fafc; }
.st-tree { width: 22px; height: 22px; margin-right: 6px; }
.status .plain { margin-right: 8px; }
.status .vline { margin: 0 3px; height: 26px; }
.msg { flex: 1; display: flex; align-items: center; gap: 1px; font-size: 11px; }
.find-wrap { display: flex; align-items: center; margin-left: 37px; height: 26px; padding: 0 2px; border: 1px solid #b0b2b4; border-width: 0 1px; }
.find { display: flex; width: 42px; height: 24px; border: 1px solid #c5c8ca; }
.pick { position: relative; display: flex; align-items: center; width: 177px; height: 25px; margin-left: 97px; border: 1px solid #b0b2b4; background: linear-gradient(90deg, transparent calc(100% - 15px), #b0b2b4 calc(100% - 15px), #b0b2b4 calc(100% - 14px), transparent calc(100% - 14px)), #f9f9f9; }
.pick select { appearance: none; border: 0; background: none; flex: 1; height: 23px; padding-left: 7px; }
.pick .arr { position: absolute; right: 3px; pointer-events: none; }
.grip { align-self: flex-end; margin: 0 0 3px 3px; }
```
